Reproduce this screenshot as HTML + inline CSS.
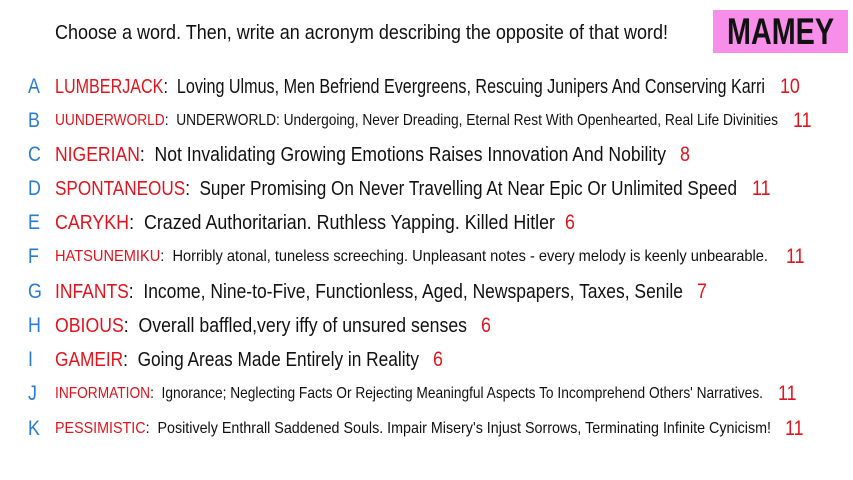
<!DOCTYPE html>
<html><head><meta charset="utf-8"><style>
html,body{margin:0;padding:0;background:#fff;width:853px;height:480px;overflow:hidden}
body{font-family:"Liberation Sans",sans-serif;position:relative}
.t{position:absolute;left:55px;top:22px;font-size:20px;color:#111;white-space:nowrap;transform-origin:0 50%;display:inline-block}
.box{position:absolute;left:713px;top:10px;width:135px;height:43px;background:#f78ee9;overflow:hidden}
.box span{position:absolute;left:14px;top:0;color:#111;font-weight:bold;font-size:37px;line-height:43px;white-space:nowrap;transform-origin:0 50%;display:inline-block}
.l{position:absolute;left:28px;color:#2a7bd0;font-size:21px;line-height:24px;transform:scaleX(0.85);transform-origin:0 50%}
.x{position:absolute;left:55px;white-space:nowrap;color:#111;line-height:24px;transform-origin:0 50%;display:inline-block}
.w{color:#e0141e}
.n{position:absolute;color:#e0141e;font-size:21px;line-height:24px;transform:scaleX(0.85);transform-origin:0 50%;white-space:nowrap}
.b{font-size:20px}
.s{font-size:16px}
</style></head><body>
<div class="t fit" id="t0">Choose a word. Then, write an acronym describing the opposite of that word!</div>
<div class="box"><span id="mm">MAMEY</span></div>

<div class="l" style="top:75px">A</div><div class="x b fit" style="top:75px"><span class="w">LUMBERJACK</span>:&nbsp; Loving Ulmus, Men Befriend Evergreens, Rescuing Junipers And Conserving Karri</div><div class="n" style="top:75px;left:780px">10</div>
<div class="l" style="top:109px">B</div><div class="x s fit" style="top:109px"><span class="w">UUNDERWORLD</span>:&nbsp; UNDERWORLD: Undergoing, Never Dreading, Eternal Rest With Openhearted, Real Life Divinities</div><div class="n" style="top:109px;left:793px">11</div>
<div class="l" style="top:143px">C</div><div class="x b fit" style="top:143px"><span class="w">NIGERIAN</span>:&nbsp; Not Invalidating Growing Emotions Raises Innovation And Nobility</div><div class="n" style="top:143px;left:680px">8</div>
<div class="l" style="top:177px">D</div><div class="x b fit" style="top:177px"><span class="w">SPONTANEOUS</span>:&nbsp; Super Promising On Never Travelling At Near Epic Or Unlimited Speed</div><div class="n" style="top:177px;left:752px">11</div>
<div class="l" style="top:211px">E</div><div class="x b fit" style="top:211px"><span class="w">CARYKH</span>:&nbsp; Crazed Authoritarian. Ruthless Yapping. Killed Hitler</div><div class="n" style="top:211px;left:565px">6</div>
<div class="l" style="top:245px">F</div><div class="x s fit" style="top:245px"><span class="w">HATSUNEMIKU</span>:&nbsp; Horribly atonal, tuneless screeching. Unpleasant notes - every melody is keenly unbearable.</div><div class="n" style="top:245px;left:786px">11</div>
<div class="l" style="top:280px">G</div><div class="x b fit" style="top:280px"><span class="w">INFANTS</span>:&nbsp; Income, Nine-to-Five, Functionless, Aged, Newspapers, Taxes, Senile</div><div class="n" style="top:280px;left:697px">7</div>
<div class="l" style="top:314px">H</div><div class="x b fit" style="top:314px"><span class="w">OBIOUS</span>:&nbsp; Overall baffled,very iffy of unsured senses</div><div class="n" style="top:314px;left:481px">6</div>
<div class="l" style="top:348px">I</div><div class="x b fit" style="top:348px"><span class="w">GAMEIR</span>:&nbsp; Going Areas Made Entirely in Reality</div><div class="n" style="top:348px;left:433px">6</div>
<div class="l" style="top:382px">J</div><div class="x s fit" style="top:382px"><span class="w">INFORMATION</span>:&nbsp; Ignorance; Neglecting Facts Or Rejecting Meaningful Aspects To Incomprehend Others' Narratives.</div><div class="n" style="top:382px;left:778px">11</div>
<div class="l" style="top:417px">K</div><div class="x s fit" style="top:417px"><span class="w">PESSIMISTIC</span>:&nbsp; Positively Enthrall Saddened Souls. Impair Misery's Injust Sorrows, Terminating Infinite Cynicism!</div><div class="n" style="top:417px;left:785px">11</div>
<script>
var ends=[668,765,778,666,737,555,768,683,467,419,763,771];
var els=document.querySelectorAll('.fit');
for(var i=0;i<els.length;i++){var w=els[i].getBoundingClientRect().width;els[i].style.transform='scaleX('+((ends[i]-55)/w)+')';}
var m=document.getElementById('mm');m.style.transform='scaleX('+(107/m.getBoundingClientRect().width)+')';
</script>
</body></html>
